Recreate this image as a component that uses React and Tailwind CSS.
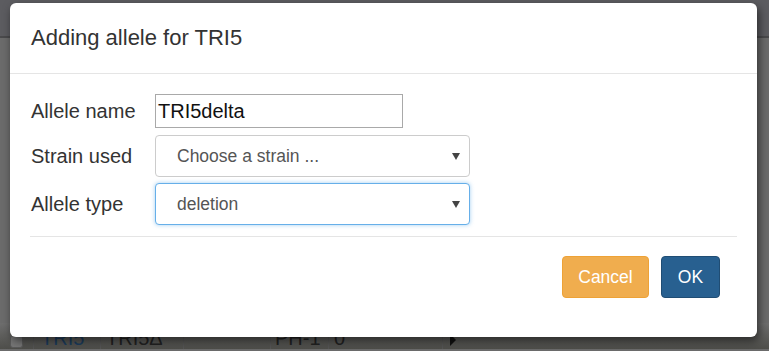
import React from 'react';

// Background page row, dimmed by the modal overlay
const BackgroundRow = () => (
  <div className="flex h-[26px] items-end bg-gradient-to-b from-[#6e6e6e] to-[#4e4e4a] text-[20px] leading-[22px] text-[#222]">
    <div className="flex h-full w-[33px] items-end justify-center pb-[1px]">
      <div className="h-[13px] w-[13px] rounded-[3px] border border-[#5a5a5a] bg-[#777]" />
    </div>
    <div className="flex h-full w-[67px] items-end border-l border-[#555] pl-[7px] text-[#1c3d5e]">TRI5</div>
    <div className="flex h-full w-[83px] items-end border-l border-[#555] pl-[5px]">TRI5Δ</div>
    <div className="h-full w-[87px] border-l border-[#555]" />
    <div className="flex h-full w-[58px] items-end border-l border-[#555] pl-[4px]">PH-1</div>
    <div className="flex h-full w-[114px] items-end border-l border-[#555] pl-[5px]">0</div>
    <div className="flex h-full items-end border-l border-[#555] pl-[6px] pb-[2px]">
      <svg width="8" height="14" viewBox="0 0 8 14"><path d="M1 1 L7 7 L1 13 Z" fill="#111" /></svg>
    </div>
  </div>
);

const SelectBox = ({ value, focused }) => (
  <div
    className={
      'flex h-[42px] w-[315px] items-center justify-between rounded-[4px] border bg-white pl-[21px] pr-[9px] text-[17.5px] text-[#555] ' +
      (focused ? 'border-[#66afe9] shadow-[0_0_4px_rgba(102,175,233,0.6)]' : 'border-[#ccc]')
    }
  >
    <span>{value}</span>
    <svg width="8" height="8" viewBox="0 0 8 8"><path d="M0 1 L8 1 L4 8 Z" fill="#444" /></svg>
  </div>
);

export default function App() {
  return (
    <div
      className="relative h-[351px] w-[769px] overflow-hidden bg-[#6b6b6b]"
      style={{ fontFamily: '"Liberation Sans", Arial, sans-serif' }}
    >
      {/* dimmed page behind */}
      <div className="h-[38px] border-b-2 border-[#4a4a4c] bg-[#5c5c60]" />
      <div className="h-[285px]" />
      <BackgroundRow />

      {/* modal */}
      <div className="absolute left-[10px] top-[3px] flex h-[334px] w-[747px] flex-col rounded-[6px] bg-white shadow-[2px_4px_10px_rgba(0,0,0,0.55)]">
        <div className="flex h-[71px] items-center border-b border-[#e5e5e5] pl-[21px]">
          <h4 className="text-[22px] leading-none text-[#333]">Adding allele for TRI5</h4>
        </div>

        <div className="px-[20px] pt-[20px]">
          <div className="flex flex-col pl-[1px]">
            <div className="flex items-center">
              <label className="w-[124px] text-[20px] text-[#333]">Allele name</label>
              <div className="flex h-[34px] w-[248px] items-center border border-[#a9a9a9] pl-[2px] text-[20px] text-[#111]">
                TRI5delta
              </div>
            </div>
            <div className="mt-[7px] flex items-center">
              <label className="w-[124px] text-[20px] text-[#333]">Strain used</label>
              <SelectBox value="Choose a strain ..." />
            </div>
            <div className="mt-[6px] flex items-center">
              <label className="w-[124px] text-[20px] text-[#333]">Allele type</label>
              <SelectBox value="deletion" focused />
            </div>
          </div>
          <div className="mt-[11px] h-px bg-[#e5e5e5]" />
        </div>

        <div className="flex justify-end gap-[12px] pr-[37px] pt-[19px]">
          <button className="h-[42px] w-[87px] rounded-[4px] border border-[#eea236] bg-[#f0ad4e] text-[17.5px] text-white">
            Cancel
          </button>
          <button className="h-[42px] w-[59px] rounded-[4px] border border-[#204d74] bg-[#286090] text-[17.5px] text-white">
            OK
          </button>
        </div>
      </div>
    </div>
  );
}
